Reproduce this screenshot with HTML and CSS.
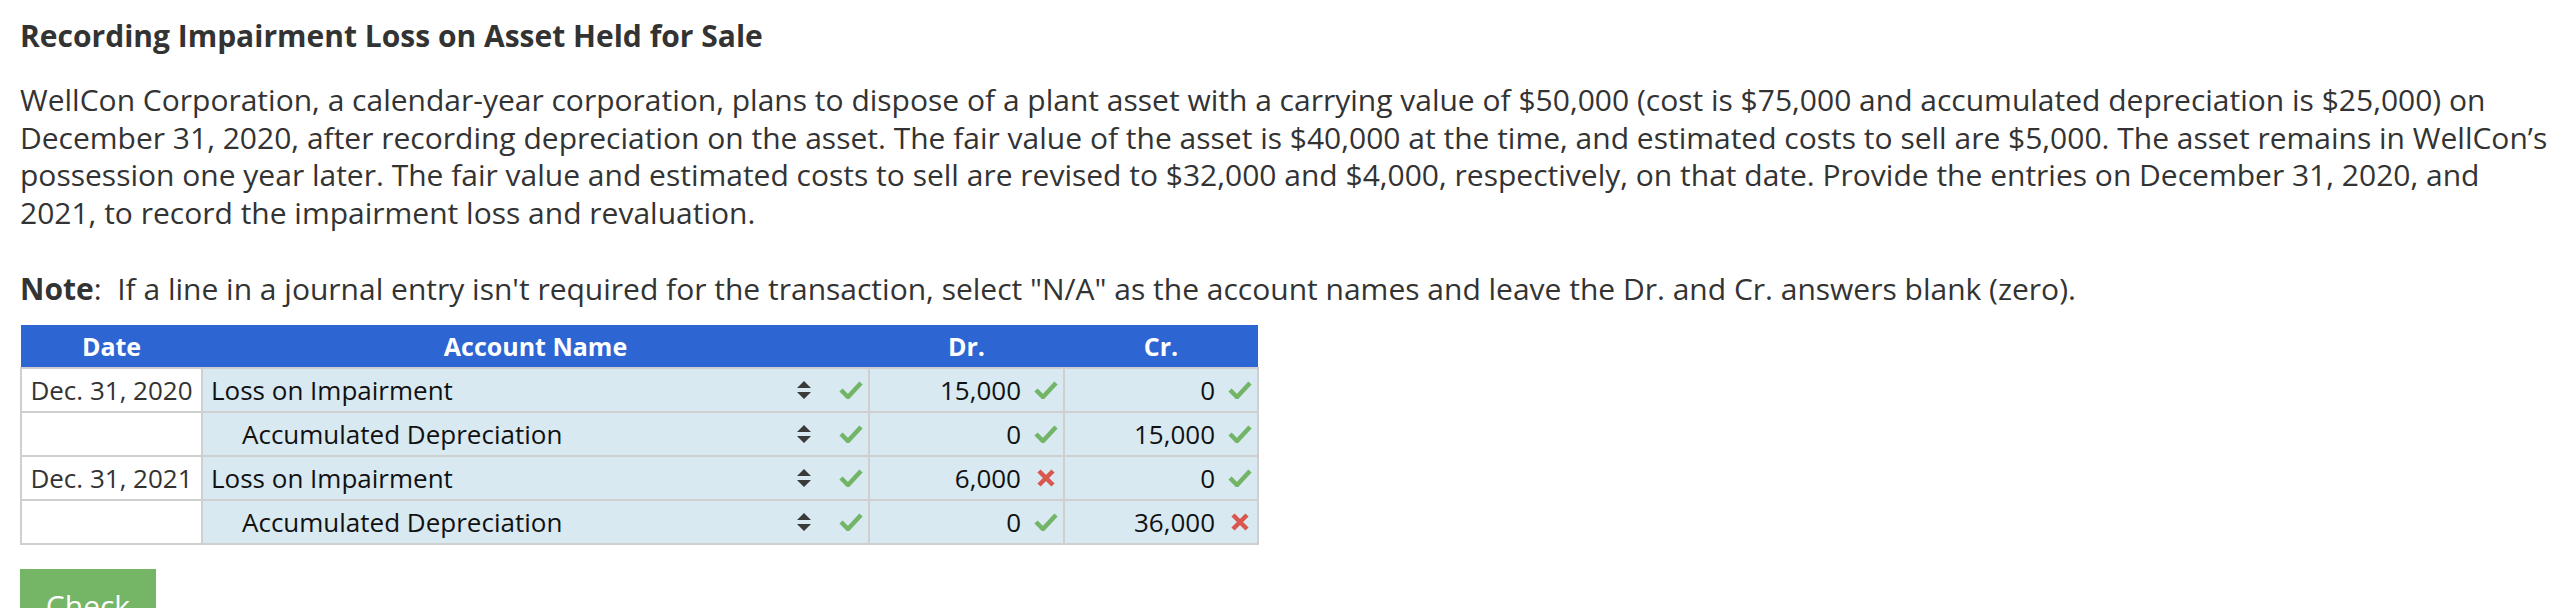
FILE: index.html
```html
<!DOCTYPE html>
<html>
<head>
<meta charset="utf-8">
<link rel="stylesheet" href="styles.css">
</head>
<body>
<h2 class="title">Recording Impairment Loss on Asset Held for Sale</h2>
<p class="text">WellCon Corporation, a calendar-year corporation, plans to dispose of a plant asset with a carrying value of $50,000 (cost is $75,000 and accumulated depreciation is $25,000) on December 31, 2020, after recording depreciation on the asset. The fair value of the asset is $40,000 at the time, and estimated costs to sell are $5,000. The asset remains in WellCon’s possession one year later. The fair value and estimated costs to sell are revised to $32,000 and $4,000, respectively, on that date. Provide the entries on December 31, 2020, and 2021, to record the impairment loss and revaluation.</p>
<p class="text note"><b>Note</b>:&nbsp; If a line in a journal entry isn't required for the transaction, select "N/A" as the account names and leave the Dr. and Cr. answers blank (zero).</p>
<table class="journal">
<colgroup><col class="w-date"><col class="w-acct"><col class="w-amt"><col class="w-amt2"></colgroup>
<thead>
<tr><th>Date</th><th>Account Name</th><th>Dr.</th><th>Cr.</th></tr>
</thead>
<tbody>
<tr>
<td class="date">Dec. 31, 2020</td>
<td class="acct"><div class="cell"><span class="name">Loss on Impairment</span><span class="spin"><svg width="16" height="20" viewBox="0 0 16 20"><path d="M8 1 L15 8 H1 Z M1 12 H15 L8 19 Z" fill="#3a3a3a"/></svg></span><span class="mark ok"><svg width="24" height="18" viewBox="0 0 24 18"><path d="M2 9 L9 16 L22 2" fill="none" stroke="#72b566" stroke-width="4.5"/></svg></span></div></td>
<td class="amt"><div class="cell"><span class="val">15,000</span><span class="mark ok"><svg width="24" height="18" viewBox="0 0 24 18"><path d="M2 9 L9 16 L22 2" fill="none" stroke="#72b566" stroke-width="4.5"/></svg></span></div></td>
<td class="amt"><div class="cell"><span class="val">0</span><span class="mark ok"><svg width="24" height="18" viewBox="0 0 24 18"><path d="M2 9 L9 16 L22 2" fill="none" stroke="#72b566" stroke-width="4.5"/></svg></span></div></td>
</tr>
<tr>
<td class="date"></td>
<td class="acct"><div class="cell"><span class="name indent">Accumulated Depreciation</span><span class="spin"><svg width="16" height="20" viewBox="0 0 16 20"><path d="M8 1 L15 8 H1 Z M1 12 H15 L8 19 Z" fill="#3a3a3a"/></svg></span><span class="mark ok"><svg width="24" height="18" viewBox="0 0 24 18"><path d="M2 9 L9 16 L22 2" fill="none" stroke="#72b566" stroke-width="4.5"/></svg></span></div></td>
<td class="amt"><div class="cell"><span class="val">0</span><span class="mark ok"><svg width="24" height="18" viewBox="0 0 24 18"><path d="M2 9 L9 16 L22 2" fill="none" stroke="#72b566" stroke-width="4.5"/></svg></span></div></td>
<td class="amt"><div class="cell"><span class="val">15,000</span><span class="mark ok"><svg width="24" height="18" viewBox="0 0 24 18"><path d="M2 9 L9 16 L22 2" fill="none" stroke="#72b566" stroke-width="4.5"/></svg></span></div></td>
</tr>
<tr>
<td class="date">Dec. 31, 2021</td>
<td class="acct"><div class="cell"><span class="name">Loss on Impairment</span><span class="spin"><svg width="16" height="20" viewBox="0 0 16 20"><path d="M8 1 L15 8 H1 Z M1 12 H15 L8 19 Z" fill="#3a3a3a"/></svg></span><span class="mark ok"><svg width="24" height="18" viewBox="0 0 24 18"><path d="M2 9 L9 16 L22 2" fill="none" stroke="#72b566" stroke-width="4.5"/></svg></span></div></td>
<td class="amt"><div class="cell"><span class="val">6,000</span><span class="mark bad"><svg width="24" height="18" viewBox="0 0 24 18"><path d="M5 2 L19 16 M19 2 L5 16" fill="none" stroke="#d9574e" stroke-width="4.5"/></svg></span></div></td>
<td class="amt"><div class="cell"><span class="val">0</span><span class="mark ok"><svg width="24" height="18" viewBox="0 0 24 18"><path d="M2 9 L9 16 L22 2" fill="none" stroke="#72b566" stroke-width="4.5"/></svg></span></div></td>
</tr>
<tr>
<td class="date"></td>
<td class="acct"><div class="cell"><span class="name indent">Accumulated Depreciation</span><span class="spin"><svg width="16" height="20" viewBox="0 0 16 20"><path d="M8 1 L15 8 H1 Z M1 12 H15 L8 19 Z" fill="#3a3a3a"/></svg></span><span class="mark ok"><svg width="24" height="18" viewBox="0 0 24 18"><path d="M2 9 L9 16 L22 2" fill="none" stroke="#72b566" stroke-width="4.5"/></svg></span></div></td>
<td class="amt"><div class="cell"><span class="val">0</span><span class="mark ok"><svg width="24" height="18" viewBox="0 0 24 18"><path d="M2 9 L9 16 L22 2" fill="none" stroke="#72b566" stroke-width="4.5"/></svg></span></div></td>
<td class="amt"><div class="cell"><span class="val">36,000</span><span class="mark bad"><svg width="24" height="18" viewBox="0 0 24 18"><path d="M5 2 L19 16 M19 2 L5 16" fill="none" stroke="#d9574e" stroke-width="4.5"/></svg></span></div></td>
</tr>
</tbody>
</table>
<button class="check">Check</button>
</body>
</html>
```

FILE: styles.css
```css
html, body {
  margin: 0;
  padding: 0;
  background: #fff;
}
body {
  padding: 0 20px;
  font-family: "Open Sans", "Noto Sans", sans-serif;
  color: #333;
}
.title {
  font-size: 30px;
  font-weight: 700;
  line-height: 38px;
  margin: 17px 0 0 0;
}
.text {
  font-size: 30px;
  line-height: 37.7px;
  margin: 26px 0 0 0;
}
.note {
  margin-top: 38px;
}
.note b {
  font-weight: 700;
}
.journal {
  margin-top: 17px;
  border-collapse: collapse;
  table-layout: fixed;
  width: 1237px;
  font-size: 26px;
}
.w-date { width: 181px; }
.w-acct { width: 667px; }
.w-amt { width: 195px; }
.w-amt2 { width: 194px; }
.journal th {
  background: #2d66d3;
  color: #fff;
  font-weight: 700;
  font-size: 25px;
  height: 42px;
  padding: 0;
  border: none;
  text-align: center;
}
.journal td {
  border: 2px solid #cfcfcf;
  padding: 0;
  background: #d8e9f1;
  color: #111;
}
.journal td.date {
  background: #fff;
  color: #333;
  text-align: center;
  height: 42px;
}
.cell {
  display: flex;
  align-items: center;
  height: 42px;
  padding: 0 5px 0 8px;
}
.name {
  flex: 1;
  white-space: nowrap;
}
.name.indent {
  padding-left: 31px;
}
.spin {
  display: flex;
  margin-right: 27px;
}
.mark {
  display: flex;
  width: 24px;
  justify-content: center;
}
.amt .cell {
  justify-content: flex-end;
  padding-right: 5px;
}
.amt .val {
  margin-right: 13px;
}
.check {
  display: block;
  margin-top: 24px;
  width: 136px;
  height: 74px;
  background: #74b566;
  border: none;
  color: #fff;
  font-family: "Open Sans", sans-serif;
  font-size: 30px;
  padding: 0;
}
```
